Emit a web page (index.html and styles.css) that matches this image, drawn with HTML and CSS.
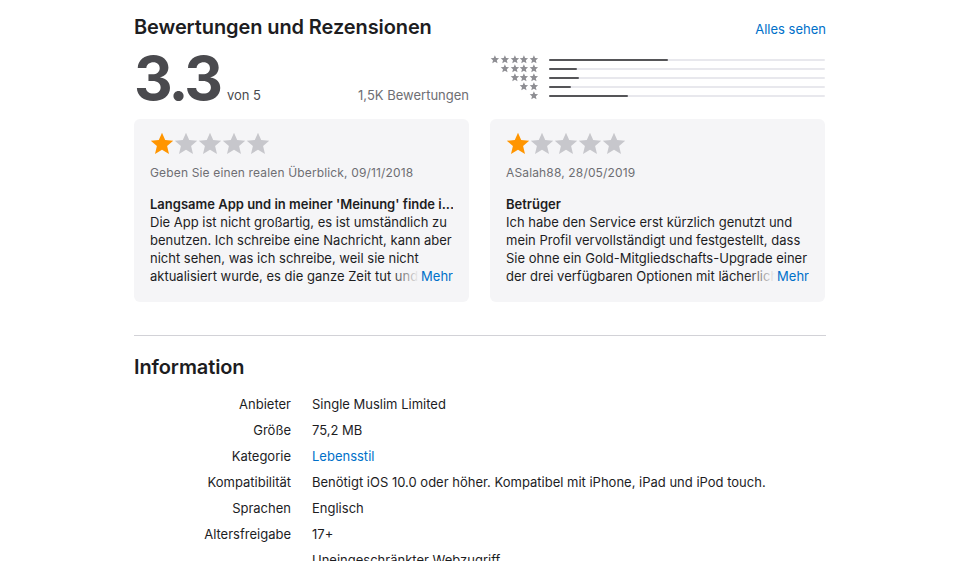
FILE: index.html
```html
<!DOCTYPE html>
<html lang="de">
<head>
<meta charset="utf-8">
<title>Bewertungen und Rezensionen</title>
<link rel="stylesheet" href="styles.css">
</head>
<body>
<svg width="0" height="0" class="defs" aria-hidden="true">
  <defs>
    <symbol id="star" viewBox="0 0 24 24">
      <polygon points="12,0.8 15.2,8.1 23.2,8.8 17.1,14 19,21.9 12,17.7 5,21.9 6.9,14 0.8,8.8 8.8,8.1"/>
    </symbol>
  </defs>
</svg>
<main class="page">
  <section class="ratings">
    <header class="section-head">
      <h2 class="section-title">Bewertungen und Rezensionen</h2>
      <a class="link see-all" href="#">Alles sehen</a>
    </header>

    <div class="summary">
      <div class="score">
        <span class="score-num">3.3</span>
        <span class="score-of">von 5</span>
        <span class="score-count">1,5K Bewertungen</span>
      </div>
      <div class="histogram">
        <div class="hist-row">
          <span class="mini-stars"><svg><use href="#star"/></svg><svg><use href="#star"/></svg><svg><use href="#star"/></svg><svg><use href="#star"/></svg><svg><use href="#star"/></svg></span>
          <span class="bar"><span class="fill" style="width:43%"></span></span>
        </div>
        <div class="hist-row">
          <span class="mini-stars"><svg><use href="#star"/></svg><svg><use href="#star"/></svg><svg><use href="#star"/></svg><svg><use href="#star"/></svg></span>
          <span class="bar"><span class="fill" style="width:10%"></span></span>
        </div>
        <div class="hist-row">
          <span class="mini-stars"><svg><use href="#star"/></svg><svg><use href="#star"/></svg><svg><use href="#star"/></svg></span>
          <span class="bar"><span class="fill" style="width:11%"></span></span>
        </div>
        <div class="hist-row">
          <span class="mini-stars"><svg><use href="#star"/></svg><svg><use href="#star"/></svg></span>
          <span class="bar"><span class="fill" style="width:8%"></span></span>
        </div>
        <div class="hist-row">
          <span class="mini-stars"><svg><use href="#star"/></svg></span>
          <span class="bar"><span class="fill" style="width:28.6%"></span></span>
        </div>
      </div>
    </div>

    <div class="reviews">
      <article class="review">
        <div class="stars">
          <svg class="on"><use href="#star"/></svg><svg><use href="#star"/></svg><svg><use href="#star"/></svg><svg><use href="#star"/></svg><svg><use href="#star"/></svg>
        </div>
        <p class="review-meta">Geben Sie einen realen Überblick, 09/11/2018</p>
        <h3 class="review-title">Langsame App und in meiner 'Meinung' finde i...</h3>
        <div class="review-body">
          <p>Die App ist nicht großartig, es ist umständlich zu benutzen. Ich schreibe eine Nachricht, kann aber nicht sehen, was ich schreibe, weil sie nicht aktualisiert wurde, es die ganze Zeit tut und hängt.</p>
          <a class="link more" href="#">Mehr</a>
        </div>
      </article>
      <article class="review">
        <div class="stars">
          <svg class="on"><use href="#star"/></svg><svg><use href="#star"/></svg><svg><use href="#star"/></svg><svg><use href="#star"/></svg><svg><use href="#star"/></svg>
        </div>
        <p class="review-meta">ASalah88, 28/05/2019</p>
        <h3 class="review-title">Betrüger</h3>
        <div class="review-body">
          <p>Ich habe den Service erst kürzlich genutzt und mein Profil vervollständigt und festgestellt, dass Sie ohne ein Gold-Mitgliedschafts-Upgrade einer der drei verfügbaren Optionen mit lächerlichen Preisen nichts tun können.</p>
          <a class="link more" href="#">Mehr</a>
        </div>
      </article>
    </div>
  </section>

  <section class="information">
    <h2 class="section-title">Information</h2>
    <dl class="info-list">
      <div class="info-row"><dt>Anbieter</dt><dd>Single Muslim Limited</dd></div>
      <div class="info-row"><dt>Größe</dt><dd>75,2 MB</dd></div>
      <div class="info-row"><dt>Kategorie</dt><dd><a class="link" href="#">Lebensstil</a></dd></div>
      <div class="info-row"><dt>Kompatibilität</dt><dd>Benötigt iOS 10.0 oder höher. Kompatibel mit iPhone, iPad und iPod touch.</dd></div>
      <div class="info-row"><dt>Sprachen</dt><dd>Englisch</dd></div>
      <div class="info-row"><dt>Altersfreigabe</dt><dd>17+</dd></div>
      <div class="info-row"><dt></dt><dd>Uneingeschränkter Webzugriff</dd></div>
    </dl>
  </section>
</main>
</body>
</html>
```
FILE: styles.css
```css
* { box-sizing: border-box; }
html, body { margin: 0; padding: 0; background: #fff; }
body {
  font-family: "Inter", "Liberation Sans", sans-serif;
  color: #1d1d1f;
  font-size: 13px;
  -webkit-font-smoothing: antialiased;
}
.defs { position: absolute; }
.page { width: 692px; margin: 0 auto; }

.link { color: #0070c9; text-decoration: none; }

.section-head {
  display: flex;
  justify-content: space-between;
  align-items: baseline;
  padding-top: 15px;
}
.section-title {
  margin: 0;
  font-size: 20px;
  line-height: 24px;
  font-weight: 600;
  letter-spacing: -0.1px;
  color: #1d1d1f;
}
.see-all { font-size: 13px; }

.summary {
  display: grid;
  grid-template-columns: 335px 335px;
  column-gap: 21px;
  margin-top: 10px;
  height: 59px;
}
.score {
  display: flex;
  align-items: baseline;
}
.score-num {
  font-size: 60px;
  line-height: 58px;
  font-weight: 700;
  letter-spacing: -3px;
  color: #4a4a4e;
}
.score-of {
  margin-left: 7px;
  font-size: 13px;
  color: #4a4a4e;
}
.score-count {
  margin-left: auto;
  font-size: 13px;
  color: #6e6e73;
}

.histogram {
  display: flex;
  flex-direction: column;
  padding-top: 6px;
}
.hist-row {
  display: flex;
  align-items: center;
  height: 9px;
}
.mini-stars {
  width: 49px;
  display: flex;
  justify-content: flex-end;
  fill: #8e8e93;
}
.mini-stars svg { width: 9.8px; height: 9px; }
.bar {
  margin-left: 10px;
  flex: 1;
  height: 2px;
  background: #e8e8ed;
  border-radius: 1px;
  display: flex;
}
.fill { background: #555558; border-radius: 1px; height: 2px; }

.reviews {
  display: grid;
  grid-template-columns: 335px 335px;
  column-gap: 21px;
  margin-top: 11px;
}
.review {
  background: #f5f5f7;
  border-radius: 6px;
  padding: 12px 16px 0 16px;
  height: 183px;
}
.stars { display: flex; fill: #c7c7cc; height: 26px; align-items: center; }
.stars svg { width: 24px; height: 24px; }
.stars svg.on { fill: #ff9500; }
.review-meta {
  margin: 8px 0 0;
  font-size: 12px;
  line-height: 16px;
  letter-spacing: 0.15px;
  color: #6e6e73;
}
.review-title {
  margin: 14px 0 0;
  font-size: 13px;
  line-height: 18px;
  font-weight: 600;
  white-space: nowrap;
  overflow: hidden;
}
.review-body {
  position: relative;
  max-height: 72px;
  overflow: hidden;
}
.review-body p {
  margin: 0;
  font-size: 13px;
  line-height: 18px;
  color: #1d1d1f;
}
.more {
  position: absolute;
  right: 0;
  bottom: 0;
  line-height: 18px;
  padding-left: 30px;
  background: linear-gradient(to right, rgba(245,245,247,0), #f5f5f7 28px);
}

.information {
  margin-top: 33px;
  border-top: 1px solid #d2d2d7;
  padding-top: 19px;
}
.info-list { margin: 12px 0 0; }
.info-row {
  display: grid;
  grid-template-columns: 157px 1fr;
  column-gap: 21px;
  height: 26px;
  align-items: center;
}
.info-row dt { text-align: right; color: #1d1d1f; }
.info-row dd { margin: 0; color: #1d1d1f; }
```
